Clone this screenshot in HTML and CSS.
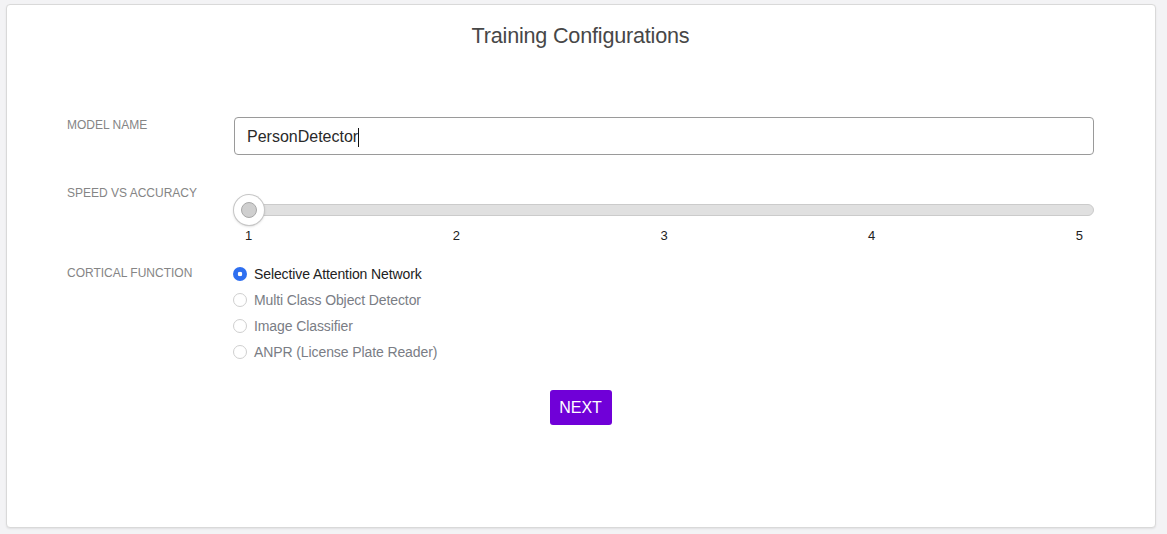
FILE: index.html
```html
<!DOCTYPE html>
<html>
<head>
<meta charset="utf-8">
<link rel="stylesheet" href="styles.css">
</head>
<body>
<div class="card">
  <h1 class="title">Training Configurations</h1>
  <div class="form">
    <div class="label label-model">MODEL NAME</div>
    <div class="field">
      <div class="text-input">PersonDetector<span class="caret"></span></div>
    </div>

    <div class="label label-speed">SPEED VS ACCURACY</div>
    <div class="field slider-field">
      <div class="slider">
        <div class="track"></div>
        <div class="thumb"><div class="thumb-inner"></div></div>
      </div>
      <div class="ticks">
        <span>1</span><span>2</span><span>3</span><span>4</span><span>5</span>
      </div>
    </div>

    <div class="label label-cortical">CORTICAL FUNCTION</div>
    <div class="field radios">
      <div class="radio-row selected"><span class="radio"></span><span>Selective Attention Network</span></div>
      <div class="radio-row"><span class="radio"></span><span>Multi Class Object Detector</span></div>
      <div class="radio-row"><span class="radio"></span><span>Image Classifier</span></div>
      <div class="radio-row"><span class="radio"></span><span>ANPR (License Plate Reader)</span></div>
    </div>
  </div>
  <div class="actions">
    <button class="next">NEXT</button>
  </div>
</div>
</body>
</html>
```

FILE: styles.css
```css
html, body {
  margin: 0;
  padding: 0;
  background: #f3f3f5;
  font-family: "Liberation Sans", Arial, sans-serif;
}
body {
  padding: 4px 11px 6px 6px;
  box-sizing: border-box;
  height: 534px;
}
.card {
  box-sizing: border-box;
  height: 524px;
  background: #fff;
  border: 1px solid #d9d9d9;
  border-radius: 4px;
  box-shadow: 0 1px 2px rgba(0,0,0,0.08);
  padding: 0 61px 0 60px;
}
.title {
  margin: 18px 0 0 0;
  font-size: 21.6px;
  line-height: 26px;
  font-weight: normal;
  color: #474747;
  text-align: center;
  letter-spacing: -0.2px;
}
.form {
  margin-top: 68px;
  display: grid;
  grid-template-columns: 167px 1fr;
  row-gap: 30px;
}
.label {
  font-size: 12px;
  line-height: 14px;
  color: #858585;
  padding-top: 1px;
}
.label-speed { margin-top: 0; }
.label-cortical { margin-top: -9px; }
.text-input {
  box-sizing: border-box;
  height: 38px;
  border: 1px solid #9a9a9a;
  border-radius: 4px;
  padding: 2px 12px 0 12px;
  font-size: 16px;
  line-height: 36px;
  color: #2a2a2a;
  display: flex;
  align-items: center;
}
.caret {
  display: inline-block;
  width: 1px;
  height: 19px;
  background: #111;
  margin-left: 0;
}
.slider-field {
  margin-top: 10px;
}
.slider {
  position: relative;
  height: 30px;
  display: flex;
  align-items: center;
}
.track {
  flex: 1;
  height: 12px;
  box-sizing: border-box;
  background: #e0e0e0;
  border: 1px solid #cbcbcb;
  border-radius: 6px;
}
.thumb {
  position: absolute;
  left: 0;
  top: 0;
  box-sizing: border-box;
  width: 30px;
  height: 30px;
  border-radius: 50%;
  background: #fff;
  box-shadow: 0 0 0 1px #c6c6c6, 0 1px 3px rgba(0,0,0,0.25);
  display: flex;
  align-items: center;
  justify-content: center;
}
.thumb-inner {
  width: 16px;
  height: 16px;
  box-sizing: border-box;
  border-radius: 50%;
  background: #cfcfcf;
  border: 1px solid #a8a8a8;
}
.ticks {
  display: flex;
  justify-content: space-between;
  padding: 0 11px 0 11px;
  margin-top: 3px;
  font-size: 13px;
  line-height: 16px;
  color: #222;
}
.radios {
  margin-top: -13px;
  display: flex;
  flex-direction: column;
}
.radio-row {
  display: flex;
  align-items: center;
  height: 26px;
  font-size: 14px;
  color: #7a7d85;
  letter-spacing: -0.1px;
}
.radio-row.selected {
  color: #222;
}
.radio {
  box-sizing: border-box;
  width: 14px;
  height: 14px;
  border-radius: 50%;
  border: 1px solid #cfcfcf;
  background: #fff;
  margin: 0 7px 0 -1px;
  flex: none;
}
.selected .radio {
  border: none;
  background: radial-gradient(circle, #fff 0 2px, #2e6ff0 2.6px);
}
.actions {
  display: flex;
  justify-content: center;
  margin-top: 25px;
}
.next {
  font-family: "Liberation Sans", Arial, sans-serif;
  height: 35px;
  width: 62px;
  padding: 0;
  border: none;
  border-radius: 3px;
  background: #7000d8;
  color: #fff;
  font-size: 16px;
  cursor: pointer;
}
```
